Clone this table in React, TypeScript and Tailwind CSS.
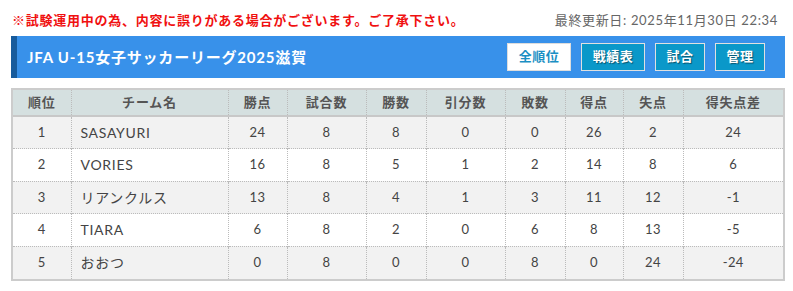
import React from 'react'

const font = { fontFamily: 'Lato, "Noto Sans CJK JP", sans-serif' }

const rows = [
  ['1', 'SASAYURI', '24', '8', '8', '0', '0', '26', '2', '24'],
  ['2', 'VORIES', '16', '8', '5', '1', '2', '14', '8', '6'],
  ['3', 'リアンクルス', '13', '8', '4', '1', '3', '11', '12', '-1'],
  ['4', 'TIARA', '6', '8', '2', '0', '6', '8', '13', '-5'],
  ['5', 'おおつ', '0', '8', '0', '0', '8', '0', '24', '-24'],
]

const heads = [
  ['順位', 'w-[58px]'],
  ['チーム名', 'w-[157px]'],
  ['勝点', 'w-[59px]'],
  ['試合数', 'w-[79px]'],
  ['勝数', 'w-[60px]'],
  ['引分数', 'w-[79px]'],
  ['敗数', 'w-[60px]'],
  ['得点', 'w-[58px]'],
  ['失点', 'w-[60px]'],
  ['得失点差', ''],
]

export default function App() {
  return (
    <div className="w-[793px] h-[291px] bg-white" style={font}>
      {/* Notice + timestamp */}
      <div className="flex items-center justify-between pl-[12px] pr-[15px] h-[36px] pt-[5px]">
        <span className="text-[13px] font-bold text-[#f01010] tracking-[0.75px]">※試験運用中の為、内容に誤りがある場合がございます。ご了承下さい。</span>
        <span className="text-[13px] text-[#666] tracking-[0.65px]">最終更新日: 2025年11月30日 22:34</span>
      </div>

      {/* Title bar */}
      <div className="ml-[11px] w-[774px] h-[42px] flex items-center bg-[#3891ea] border-l-[6px] border-[#175b9c] pl-[10px] pr-[20px]">
        <h1 className="text-[15px] font-bold text-white tracking-[0.8px]">JFA U-15女子サッカーリーグ2025滋賀</h1>
        <div className="ml-auto flex gap-[10px]">
          <button className="w-[64px] h-[28px] bg-white border border-[#ddd] text-[#1a8fc4] text-[13px] font-bold tracking-[0.5px]">全順位</button>
          <button className="w-[64px] h-[28px] bg-[#0a98c9] border border-[#e0e0e0] text-white text-[13px] font-bold tracking-[0.5px] [text-shadow:1px_1px_1px_rgba(0,0,0,0.45)]">戦績表</button>
          <button className="w-[50px] h-[28px] bg-[#0a98c9] border border-[#e0e0e0] text-white text-[13px] font-bold tracking-[0.5px] [text-shadow:1px_1px_1px_rgba(0,0,0,0.45)]">試合</button>
          <button className="w-[50px] h-[28px] bg-[#0a98c9] border border-[#e0e0e0] text-white text-[13px] font-bold tracking-[0.5px] [text-shadow:1px_1px_1px_rgba(0,0,0,0.45)]">管理</button>
        </div>
      </div>

      {/* Standings */}
      <div className="ml-[11px] mt-[10px] w-[774px] border-2 border-[#ccc]">
        <table className="w-full border-collapse table-fixed text-[13px] text-[#444]">
          <thead>
            <tr className="bg-[#d5e0e0] h-[26px] border-b-2 border-solid border-[#c8c8c8]">
              {heads.map(([h, w], i) => (
                <th
                  key={h}
                  className={`${w} font-bold text-[#555] text-center tracking-[0.8px] ${i < heads.length - 1 ? 'border-r border-dotted border-[#bbb]' : ''}`}
                >
                  {h}
                </th>
              ))}
            </tr>
          </thead>
          <tbody>
            {rows.map((r, ri) => (
              <tr
                key={r[0]}
                className={`h-[32.5px] ${ri % 2 === 0 ? 'bg-[#f2f2f2]' : 'bg-white'} ${ri < rows.length - 1 ? 'border-b border-dotted border-[#bbb]' : ''}`}
              >
                {r.map((c, ci) => (
                  <td
                    key={ci}
                    className={`${ci === 1 ? 'text-left pl-[9px] text-[14px] tracking-[0.7px]' : 'text-center tracking-[0.4px]'} ${ci < r.length - 1 ? 'border-r border-dotted border-[#bbb]' : ''}`}
                  >
                    {c}
                  </td>
                ))}
              </tr>
            ))}
          </tbody>
        </table>
      </div>
    </div>
  )
}
